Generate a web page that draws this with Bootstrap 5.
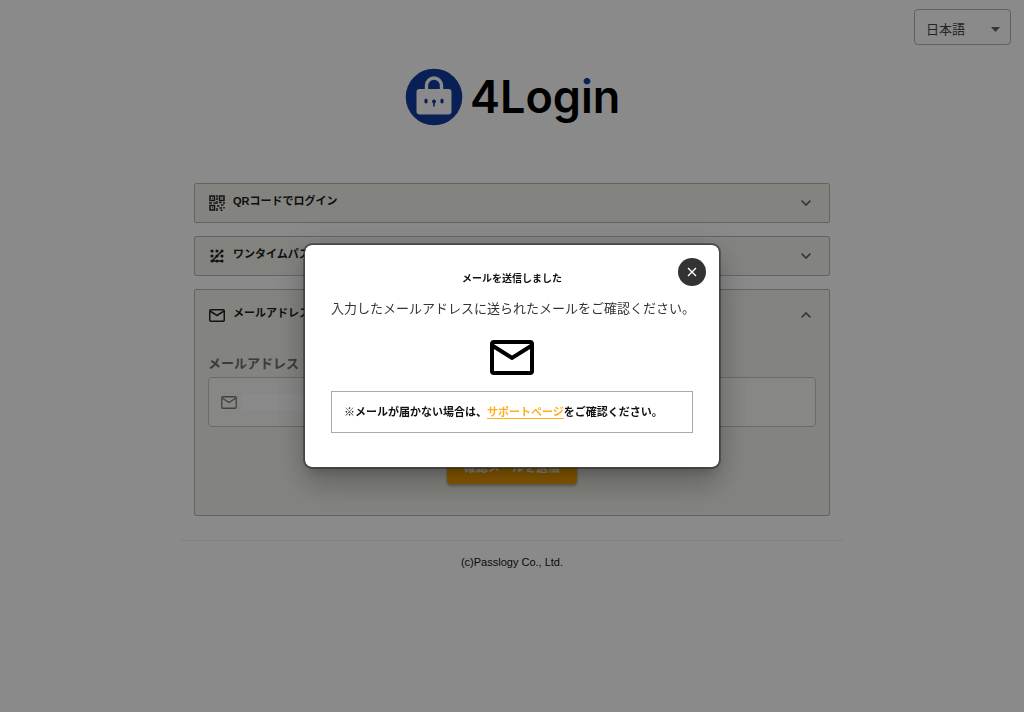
<!DOCTYPE html>
<html lang="ja">
<head>
<meta charset="utf-8">
<meta name="viewport" content="width=device-width, initial-scale=1">
<title>4Login</title>
<link href="https://cdn.jsdelivr.net/npm/bootstrap@5.3.0/dist/css/bootstrap.min.css" rel="stylesheet">
<style>
  body { font-family: "Liberation Sans", "Noto Sans CJK JP", sans-serif; font-size: 13px; line-height: 20px; color: #111; }
  svg { display: block; flex: none; }
  .topbar { padding: 9px 13px 0; }
  .lang-box { width: 97px; position: relative; }
  .lang-box select { height: 36px; font-size: 13px; line-height: 20px; padding: 10px 11px 4px; color: #444; background: none; border-color: #b4b4b4; border-radius: 4px; }
  .lang-box svg { position: absolute; right: 11px; top: 18px; pointer-events: none; }
  .brand { padding-top: 22px; padding-bottom: 56px; }
  .page { max-width: 664px; }
  .panels { padding: 0 14px; gap: 13px; }
  .panel { background: #f3f3ec; border: 1px solid #b9b9b6; border-radius: 2px; }
  .panel-toggle { background: none; border: 0; width: 100%; height: 38px; padding: 0 18px 0 14px; color: #1c1c1c; font-size: 11px; font-weight: 700; gap: 8px; }
  .panel-toggle .label-text { margin-bottom: 4px; }
  .panel.open .panel-toggle { height: 50px; }
  .panel-body { padding: 14px 13px 31px; }
  .field-label { font-weight: 700; color: #6d6d6d; margin-bottom: 3px; line-height: 20px; }
  .field-wrap { height: 50px; border: 1px solid #c4c4c4; border-radius: 4px; background: #fafaf8; padding: 0 12px; gap: 5px; }
  .field-wrap input { height: 18px; font-size: 13px; padding: 0 2px; border: 0; border-radius: 0; background: linear-gradient(#fff, #fff) left / 62px 16px no-repeat; }
  .btn-send { background: #ffa900; color: #fff; width: 130px; height: 32px; font-size: 12px; font-weight: 700; padding: 0; border: 0; border-radius: 4px; margin-top: 25px; box-shadow: 0 2px 3px rgba(0, 0, 0, .3); }
  .foot { border-top: 1px solid #f0f0f0; margin-top: 24px; padding-top: 11px; font-size: 11px; }
  .modal-backdrop { --bs-backdrop-opacity: .46; }
  .modal-dialog { --bs-modal-width: 416px; }
  .modal-content { border: 1px solid #444; border-radius: 8px; padding: 24px 26px 34px; box-shadow: 0 0 0 1px rgba(0, 0, 0, .3), 0 9px 12px -5px rgba(0, 0, 0, .2), 0 19px 30px 2px rgba(0, 0, 0, .14), 0 7px 36px 6px rgba(0, 0, 0, .12); }
  .modal-title { font-size: 10px; font-weight: 700; line-height: 20px; color: #111; }
  .message { line-height: 20px; margin: 10px 0 21px; white-space: nowrap; color: #333; }
  .note { border: 1px solid #aaa; margin-top: 16px; padding: 10px 12px; font-size: 11px; font-weight: 700; line-height: 20px; }
  .note a { color: #ffb01f; text-underline-offset: 2px; text-decoration-thickness: 1px; }
  .btn-round { position: absolute; top: 13px; right: 13px; width: 28px; height: 28px; border-radius: 50%; background: #333; border: 0; padding: 0; }
</style>
</head>
<body>
<header class="topbar d-flex justify-content-end">
  <div class="lang-box">
    <select class="form-select" aria-label="言語"><option>日本語</option></select>
    <svg width="9" height="5" viewBox="0 0 9 5"><path d="M0 0h9L4.500 5z" fill="#666"/></svg>
  </div>
</header>

<main class="page mx-auto">
  <div class="brand d-flex justify-content-center">
    <svg width="214" height="60" viewBox="0 0 214 60" overflow="visible" role="img" aria-label="4Login">
      <defs>
        <linearGradient id="dot" gradientUnits="userSpaceOnUse" x1="0" y1="0" x2="0" y2="60"><stop offset=".34" stop-color="#103c9f"/><stop offset=".34" stop-color="#000"/></linearGradient>
      </defs>
      <circle cx="29" cy="30" r="28.300" fill="#103c9f"/>
      <path d="M21.500 23v-4.500a7.500 7.500 0 0 1 15 0V23" fill="none" stroke="#fff" stroke-width="3.400"/>
      <rect x="11.500" y="22" width="35" height="25.500" rx="3" fill="#fff"/>
      <g fill="#103c9f"><ellipse cx="21" cy="34" rx="1.700" ry="2.600"/><ellipse cx="37" cy="34" rx="1.700" ry="2.600"/><circle cx="29" cy="34.500" r="1.900"/><path d="M28.200 35h1.600v4.500h-1.600z"/></g>
      <text x="65" y="46" font-family="Inter, sans-serif" font-weight="600" font-size="45" fill="#000">4Log<tspan fill="url(#dot)">i</tspan>n</text>
    </svg>
  </div>

  <div class="panels d-flex flex-column">
    <section class="panel">
      <button class="panel-toggle d-flex align-items-center" type="button">
        <svg width="16" height="16" viewBox="0 0 16 16" fill="none" stroke="#222" stroke-width="1.500"><path d="M1 1h4.500v4.500H1zM10.500 1H15v4.500h-4.500zM1 10.500h4.500V15H1z"/><path d="M3 3.200h.8M12.500 3.200h.8M3 12.700h.8M8 0v2.500M7 4h2M8 6v3M0 8h3M4.500 8H7M10 7.500h2.500M14 8h2M8 11h2.500M12 10h2.500M10.500 13H13M8 13v3M15 12v1.500M11.500 15.200h2"/></svg>
        <span class="label-text">QRコードでログイン</span>
        <svg class="ms-auto" width="10" height="6" viewBox="0 0 10 6" fill="none" stroke="#666" stroke-width="1.700"><path d="M.6.6 5 5 9.400.6"/></svg>
      </button>
    </section>
    <section class="panel">
      <button class="panel-toggle d-flex align-items-center" type="button">
        <svg width="16" height="16" viewBox="0 0 16 16" fill="#222"><circle cx="3" cy="3" r="1.600"/><circle cx="8" cy="3" r="1.600"/><circle cx="3" cy="8" r="1.600"/><circle cx="8" cy="8" r="1.600"/><circle cx="13" cy="8" r="1.600"/><circle cx="3" cy="13" r="1.600"/><circle cx="8" cy="13" r="1.600"/><circle cx="13" cy="13" r="1.600"/><circle cx="13" cy="3" r="1.600"/><path d="M3 13 13 3M3 13h10" stroke="#222" stroke-width="1.500"/></svg>
        <span class="label-text">ワンタイムパスワード</span>
        <svg class="ms-auto" width="10" height="6" viewBox="0 0 10 6" fill="none" stroke="#666" stroke-width="1.700"><path d="M.6.6 5 5 9.400.6"/></svg>
      </button>
    </section>
    <section class="panel open">
      <button class="panel-toggle d-flex align-items-center" type="button">
        <svg width="16" height="13" viewBox="0 0 16 13" fill="none" stroke="#222" stroke-width="1.500"><rect x=".75" y=".75" width="14.500" height="11.500" rx="1"/><path d="M1 2l7 4.500L15 2"/></svg>
        <span class="label-text">メールアドレス</span>
        <svg class="ms-auto" width="10" height="6" viewBox="0 0 10 6" fill="none" stroke="#666" stroke-width="1.700"><path d="M.6 5.400 5 1l4.400 4.400"/></svg>
      </button>
      <form class="panel-body">
        <label class="field-label d-block" for="mail">メールアドレス</label>
        <div class="field-wrap d-flex align-items-center">
          <svg width="16" height="13" viewBox="0 0 16 13" fill="none" stroke="#777" stroke-width="1.300"><rect x=".75" y=".75" width="14.500" height="11.500" rx="1"/><path d="M1 2l7 4.500L15 2"/></svg>
          <input class="form-control" type="email" id="mail">
        </div>
        <button class="btn btn-send d-block mx-auto" type="button">確認メールを送信</button>
      </form>
    </section>
  </div>
  <footer class="foot text-center">(c)Passlogy Co., Ltd.</footer>
</main>

<div class="modal-backdrop show"></div>
<div class="modal d-block" role="dialog" aria-modal="true" aria-labelledby="sent-title">
  <div class="modal-dialog modal-dialog-centered mx-auto my-0 min-vh-100">
    <div class="modal-content">
      <button class="btn btn-round d-flex align-items-center justify-content-center" type="button" aria-label="閉じる">
        <svg width="10" height="10" viewBox="0 0 10 10" stroke="#fff" stroke-width="1.400"><path d="m1 1 8 8M9 1 1 9"/></svg>
      </button>
      <h1 class="modal-title text-center" id="sent-title">メールを送信しました</h1>
      <p class="message">入力したメールアドレスに送られたメールをご確認ください。</p>
      <svg class="mx-auto" width="44" height="35" viewBox="0 0 44 35" fill="none" stroke="#000" stroke-width="4"><rect x="2" y="2" width="40" height="31" rx="2"/><path d="m3 6 19 12L41 6"/></svg>
      <div class="note">※メールが届かない場合は、<a href="#">サポートページ</a>をご確認ください。</div>
    </div>
  </div>
</div>
<script src="https://cdn.jsdelivr.net/npm/bootstrap@5.3.0/dist/js/bootstrap.bundle.min.js"></script>
</body>
</html>
